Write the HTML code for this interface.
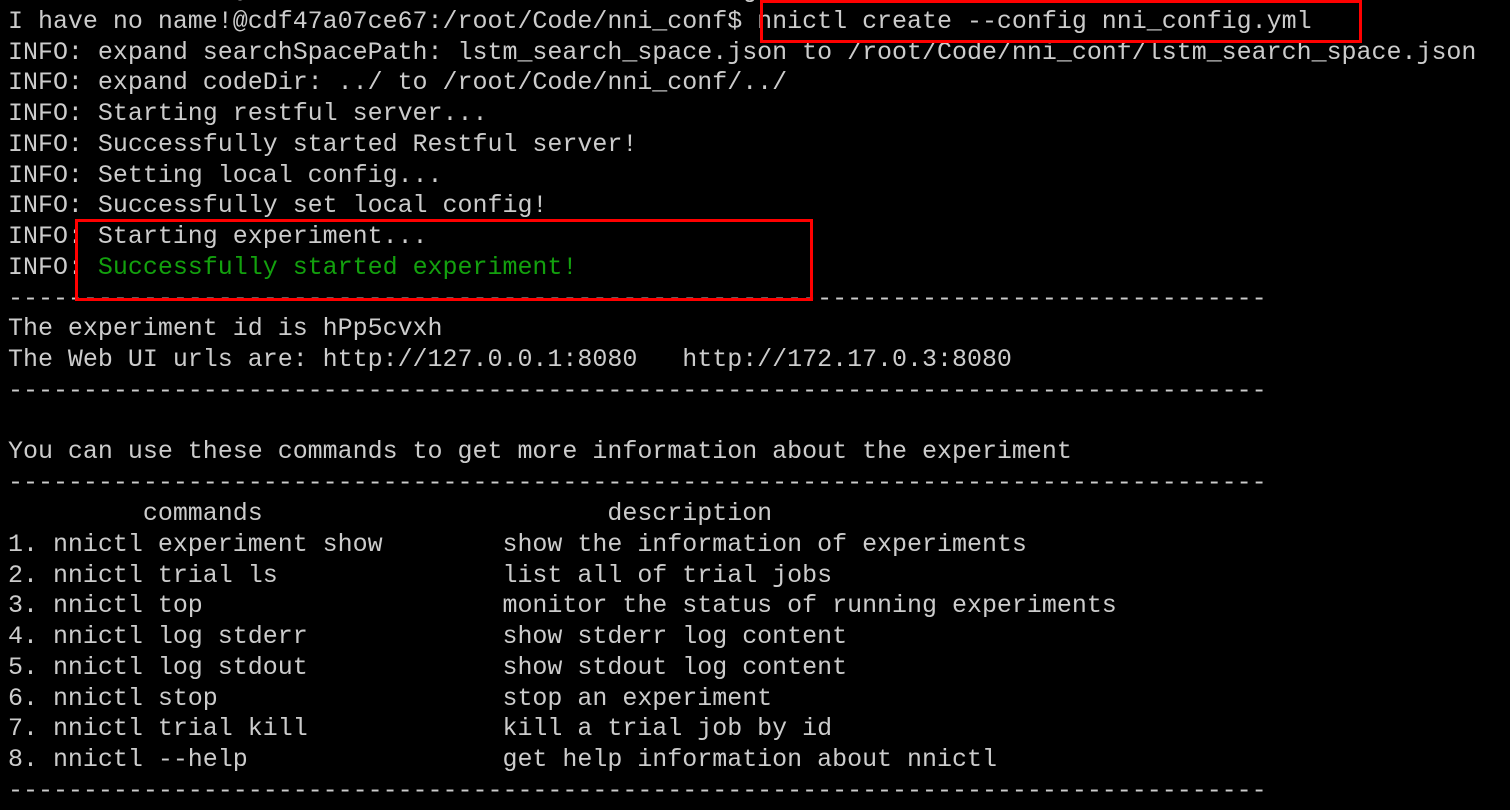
<!DOCTYPE html>
<html><head><meta charset="utf-8"><style>
html,body{margin:0;padding:0;background:#000;width:1510px;height:810px;overflow:hidden;position:relative}
pre{position:absolute;left:8px;top:-24px;margin:0;font-family:"Liberation Mono",monospace;font-size:24.97px;line-height:30.77px;color:#cccccc;white-space:pre}
.g{color:#13a10e}
.box{position:absolute;border:3px solid #f00;box-sizing:border-box}
</style></head><body>
<pre>I_have_no_name_@cdf47a07ce67:/root/Code/nni_config_
I have no name!@cdf47a07ce67:/root/Code/nni_conf$ nnictl create --config nni_config.yml
INFO: expand searchSpacePath: lstm_search_space.json to /root/Code/nni_conf/lstm_search_space.json
INFO: expand codeDir: ../ to /root/Code/nni_conf/../
INFO: Starting restful server...
INFO: Successfully started Restful server!
INFO: Setting local config...
INFO: Successfully set local config!
INFO: Starting experiment...
INFO: <span class="g">Successfully started experiment!</span>
------------------------------------------------------------------------------------
The experiment id is hPp5cvxh
The Web UI urls are: http://127.0.0.1:8080   http://172.17.0.3:8080
------------------------------------------------------------------------------------

You can use these commands to get more information about the experiment
------------------------------------------------------------------------------------
         commands                       description
1. nnictl experiment show        show the information of experiments
2. nnictl trial ls               list all of trial jobs
3. nnictl top                    monitor the status of running experiments
4. nnictl log stderr             show stderr log content
5. nnictl log stdout             show stdout log content
6. nnictl stop                   stop an experiment
7. nnictl trial kill             kill a trial job by id
8. nnictl --help                 get help information about nnictl
------------------------------------------------------------------------------------
</pre>
<div class="box" style="left:760px;top:0;width:602px;height:43px"></div>
<div class="box" style="left:75px;top:219px;width:738px;height:82px"></div>
</body></html>
